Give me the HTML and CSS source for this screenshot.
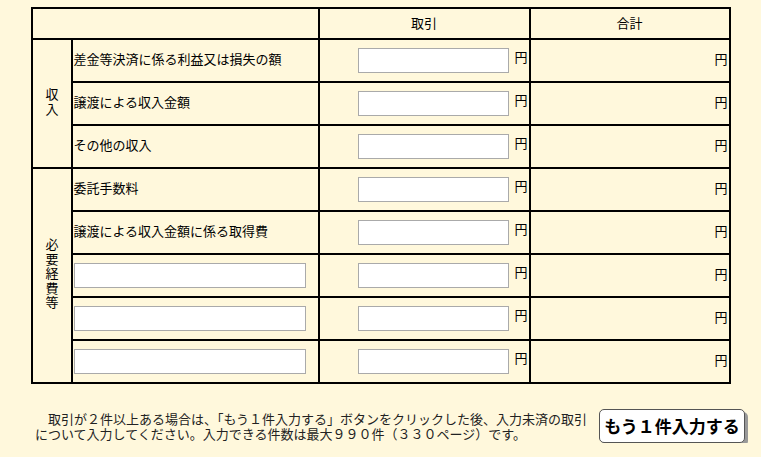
FILE: index.html
```html
<!DOCTYPE html>
<html lang="ja">
<head>
    <meta charset="UTF-8">
    <meta name="viewport" content="width=device-width, initial-scale=1.0">
    <title>取引の入力</title>
    <link rel="stylesheet" href="styles.css">
</head>
<body>
    <table class="calc">
        <colgroup>
            <col class="c-group">
            <col class="c-label">
            <col class="c-amount">
            <col class="c-total">
        </colgroup>
        <tr class="head">
            <th colspan="2"></th>
            <th>取引</th>
            <th>合計</th>
        </tr>
        <tr>
            <td class="group" rowspan="3"><span class="vtext">収入</span></td>
            <td class="label">差金等決済に係る利益又は損失の額</td>
            <td class="amount"><input type="text"><span class="yen">円</span></td>
            <td class="total">円</td>
        </tr>
        <tr>
            <td class="label">譲渡による収入金額</td>
            <td class="amount"><input type="text"><span class="yen">円</span></td>
            <td class="total">円</td>
        </tr>
        <tr>
            <td class="label">その他の収入</td>
            <td class="amount"><input type="text"><span class="yen">円</span></td>
            <td class="total">円</td>
        </tr>
        <tr>
            <td class="group" rowspan="5"><span class="vtext">必要経費等</span></td>
            <td class="label">委託手数料</td>
            <td class="amount"><input type="text"><span class="yen">円</span></td>
            <td class="total">円</td>
        </tr>
        <tr>
            <td class="label">譲渡による収入金額に係る取得費</td>
            <td class="amount"><input type="text"><span class="yen">円</span></td>
            <td class="total">円</td>
        </tr>
        <tr>
            <td class="label entry"><input type="text" class="name"></td>
            <td class="amount"><input type="text"><span class="yen">円</span></td>
            <td class="total">円</td>
        </tr>
        <tr>
            <td class="label entry"><input type="text" class="name"></td>
            <td class="amount"><input type="text"><span class="yen">円</span></td>
            <td class="total">円</td>
        </tr>
        <tr>
            <td class="label entry"><input type="text" class="name"></td>
            <td class="amount"><input type="text"><span class="yen">円</span></td>
            <td class="total">円</td>
        </tr>
    </table>

    <div class="footer">
        <p class="note">取引が２件以上ある場合は、「もう１件入力する」ボタンをクリックした後、入力未済の取引について入力してください。入力できる件数は最大９９０件（３３０ページ）です。</p>
        <a class="more">もう１件入力する</a>
    </div>
</body>
</html>
```

FILE: styles.css
```css
body {
    margin: 7px 8px 8px;
    background-color: #fff8dc;
    color: #000;
    font-family: "Noto Sans CJK JP", "Liberation Sans", sans-serif;
    font-size: 13px;
}
.calc {
    width: 700px;
    margin: 0 auto;
    border-collapse: collapse;
    table-layout: fixed;
}
.c-group { width: 40px; }
.c-label { width: 247px; }
.c-amount { width: 211px; }
.c-total { width: 200px; }
.calc th,
.calc td {
    border: 2px solid #000;
    padding: 0 1px;
    height: 41px;
    line-height: 16px;
    vertical-align: middle;
}
.calc .head th {
    height: 27px;
    padding-bottom: 2px;
    font-weight: normal;
    text-align: center;
}
.group {
    text-align: center;
}
.vtext {
    display: inline-block;
    writing-mode: vertical-rl;
    text-orientation: upright;
    letter-spacing: 1.5px;
    line-height: 14px;
}
.label {
    text-align: left;
}
.calc td.label,
.calc td.total {
    height: 38px;
    padding-bottom: 3px;
}
.calc td.entry {
    height: 41px;
    padding-bottom: 0;
}
.amount,
.total {
    text-align: right;
    white-space: nowrap;
}
.yen {
    display: inline-block;
    margin-left: 5px;
    vertical-align: 2px;
}
input {
    box-sizing: border-box;
    width: 151px;
    height: 25px;
    margin: 0;
    border: 1px solid #aaa;
    background: #fff;
    vertical-align: middle;
    font-family: inherit;
}
input.name {
    width: 232px;
}
.footer {
    display: flex;
    align-items: center;
    justify-content: space-between;
    margin-top: 25px;
    padding: 0 8px 0 27px;
}
.note {
    margin: 0;
    width: 558px;
    line-height: 15px;
    text-indent: 1em;
    color: #222;
}
.more {
    display: inline-block;
    box-sizing: border-box;
    width: 146px;
    height: 34px;
    line-height: 32px;
    text-align: center;
    border: 1px solid #555;
    border-radius: 5px;
    background: #fff;
    box-shadow: 3px 3px 0 #999;
    font-size: 17px;
    font-weight: bold;
    color: #000;
    cursor: pointer;
}
.more:hover {
    opacity: 0.9;
}
```
